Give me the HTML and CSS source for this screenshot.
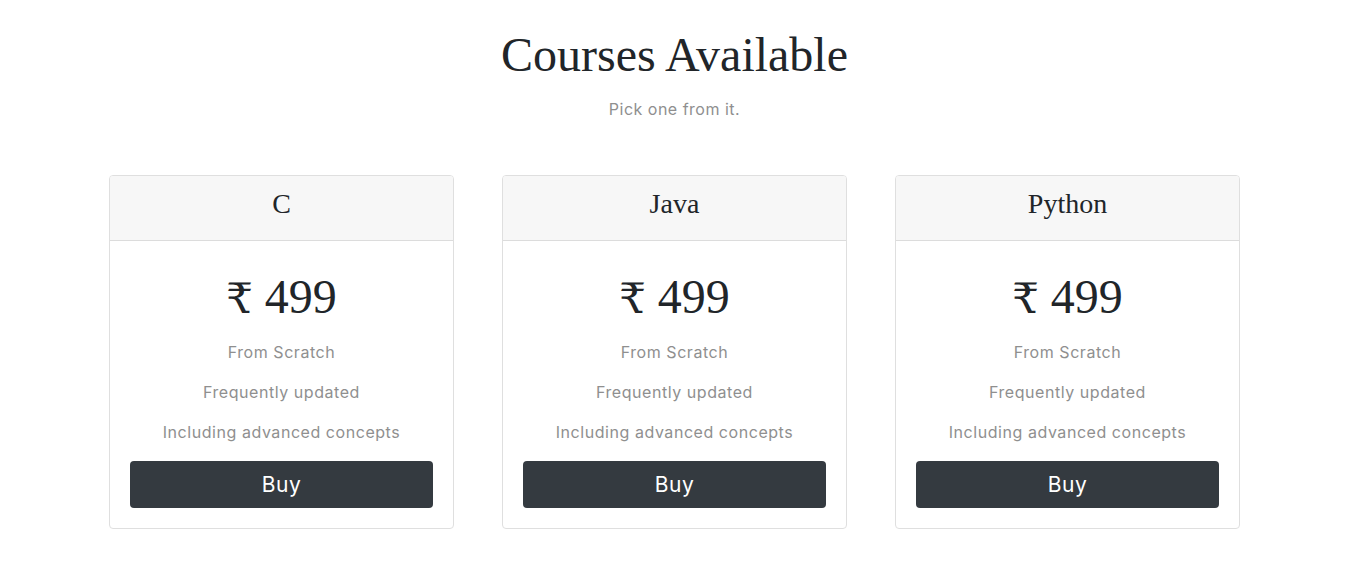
FILE: index.html
```html
<!DOCTYPE html>
<html lang="en">
<head>
<meta charset="utf-8">
<title>Courses Available</title>
<link rel="stylesheet" href="styles.css">
</head>
<body>
<main class="page">
  <header class="intro">
    <h1 class="intro-title">Courses Available</h1>
    <p class="intro-lead">Pick one from it.</p>
  </header>
  <section class="deck">
    <article class="card">
      <div class="card-header"><h4 class="card-name">C</h4></div>
      <div class="card-body">
        <h1 class="price"><span class="rupee">₹</span> 499</h1>
        <ul class="features">
          <li>From Scratch</li>
          <li>Frequently updated</li>
          <li>Including advanced concepts</li>
        </ul>
        <button class="buy" type="button">Buy</button>
      </div>
    </article>
    <article class="card">
      <div class="card-header"><h4 class="card-name">Java</h4></div>
      <div class="card-body">
        <h1 class="price"><span class="rupee">₹</span> 499</h1>
        <ul class="features">
          <li>From Scratch</li>
          <li>Frequently updated</li>
          <li>Including advanced concepts</li>
        </ul>
        <button class="buy" type="button">Buy</button>
      </div>
    </article>
    <article class="card">
      <div class="card-header"><h4 class="card-name">Python</h4></div>
      <div class="card-body">
        <h1 class="price"><span class="rupee">₹</span> 499</h1>
        <ul class="features">
          <li>From Scratch</li>
          <li>Frequently updated</li>
          <li>Including advanced concepts</li>
        </ul>
        <button class="buy" type="button">Buy</button>
      </div>
    </article>
  </section>
</main>
</body>
</html>
```
FILE: styles.css
```css
* { box-sizing: border-box; }
html, body { margin: 0; padding: 0; background: #fff; }
body {
  font-family: "Inter", "Noto Sans", sans-serif;
  color: #212529;
}
.page {
  padding: 26px 0 0 3px;
}
.intro {
  text-align: center;
}
.intro-title {
  margin: 0;
  font-family: "Liberation Serif", "DejaVu Serif", serif;
  font-weight: 400;
  font-size: 48px;
  line-height: 57px;
  color: #212529;
}
.intro-lead {
  margin: 14px 0 0;
  font-size: 16px;
  line-height: 24px;
  letter-spacing: 0.5px;
  color: #8f8f8f;
}
.deck {
  width: 1131px;
  margin: 54px auto 0;
  display: grid;
  grid-template-columns: repeat(3, 1fr);
  gap: 48px;
}
.card {
  border: 1px solid #dfdfdf;
  border-radius: 4px;
  display: flex;
  flex-direction: column;
  text-align: center;
  overflow: hidden;
}
.card-header {
  height: 65px;
  padding-bottom: 8px;
  background: #f7f7f7;
  border-bottom: 1px solid #dcdcdc;
  display: flex;
  align-items: center;
  justify-content: center;
}
.card-name {
  margin: 0;
  font-family: "Liberation Serif", "DejaVu Serif", serif;
  font-weight: 400;
  font-size: 28px;
  line-height: 34px;
  color: #212529;
}
.card-body {
  padding: 27px 20px 20px;
}
.price {
  margin: 0;
  font-family: "Liberation Serif", "DejaVu Serif", serif;
  font-weight: 400;
  font-size: 48px;
  line-height: 57px;
  color: #212529;
}
.rupee {
  font-size: 42px;
  font-weight: 300;
}
.features {
  list-style: none;
  margin: 12px 0 0;
  padding: 0;
  color: #8f8f8f;
  font-size: 16px;
  line-height: 24px;
  letter-spacing: 0.55px;
}
.features li {
  margin-bottom: 16px;
}
.features li:last-child {
  margin-bottom: 17px;
}
.buy {
  display: block;
  width: 100%;
  height: 47px;
  border: 0;
  border-radius: 4px;
  background: #343a40;
  color: #fff;
  font-family: inherit;
  font-size: 21px;
  letter-spacing: 0.5px;
  cursor: pointer;
}
```
